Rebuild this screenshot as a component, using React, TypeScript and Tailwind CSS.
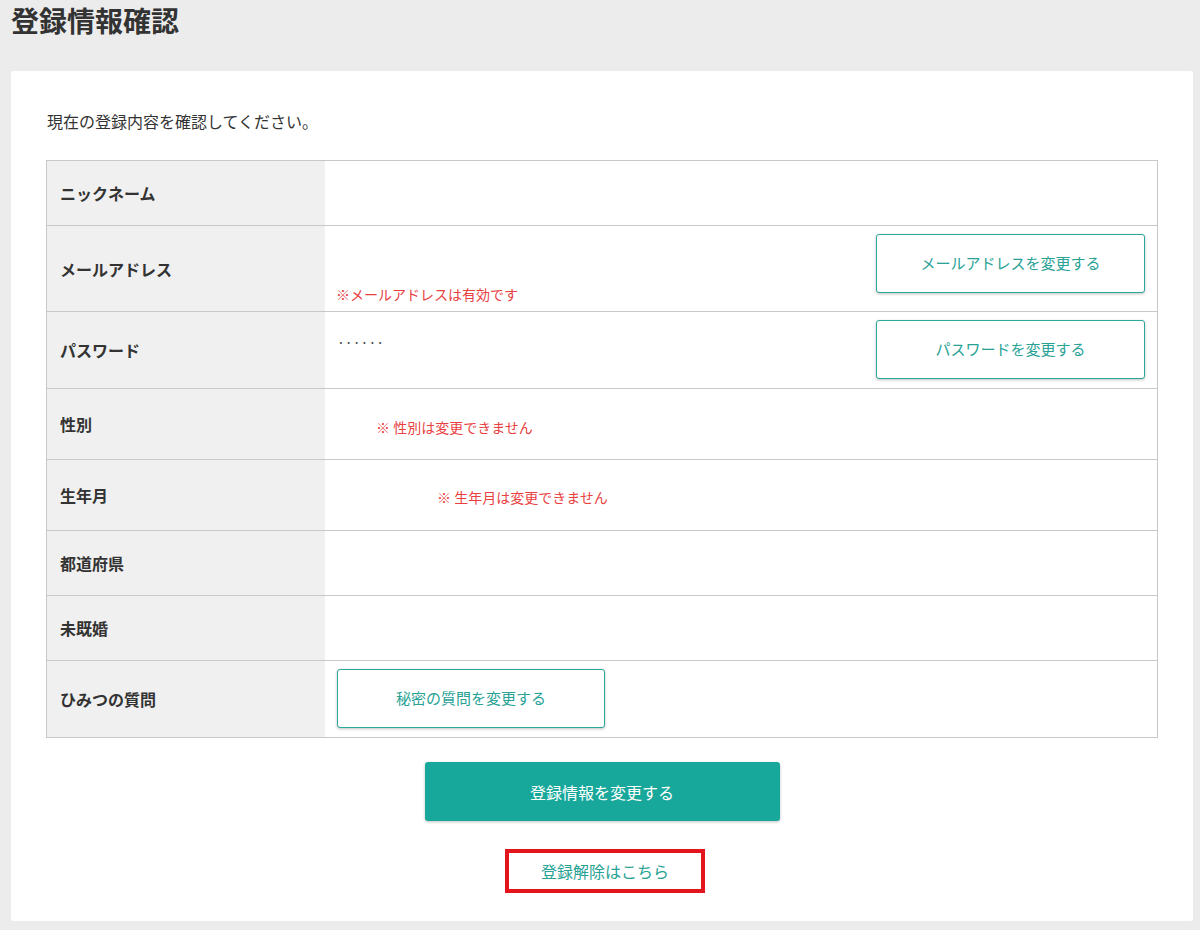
import React from "react";

const font = { fontFamily: '"Noto Sans CJK JP", "Noto Sans", sans-serif' };

function Label({ children }: { children: React.ReactNode }) {
  return (
    <div className="w-[278px] shrink-0 bg-[#f0f0f0] flex items-center pl-[13px] text-[16px] font-bold text-[#333]">
      {children}
    </div>
  );
}

function OutlineButton({ children, w }: { children: React.ReactNode; w: string }) {
  return (
    <button
      className={`${w} h-[59px] rounded-[3px] border border-[#2aa89a] bg-white text-[15px] text-[#27a295] shadow-[0_1px_3px_rgba(0,0,0,0.25)] flex items-center justify-center`}
    >
      {children}
    </button>
  );
}

export default function App() {
  return (
    <div className="min-h-[930px] w-[1200px] bg-[#ececec] pb-[10px]" style={font}>
      <h1 className="pl-[11px] h-[40px] leading-[40px] text-[28px] font-bold text-[#333]">登録情報確認</h1>
      <div className="mt-[31px] ml-[11px] w-[1182px] bg-white rounded-[3px] pt-[38px] pb-[28px] px-[35px]">
        <p className="text-[16px] leading-[24px] text-[#333] pl-[1px]">現在の登録内容を確認してください。</p>
        <div className="mt-[27px] border border-[#c8c8c8] flex flex-col">
          <div className="flex h-[65px] border-b border-[#c8c8c8]">
            <Label>ニックネーム</Label>
            <div className="flex-1" />
          </div>
          <div className="flex h-[86px] border-b border-[#c8c8c8]">
            <Label>メールアドレス</Label>
            <div className="flex-1 flex justify-between pr-[12px] pl-[11px]">
              <div className="self-end pb-[7px] text-[14px] leading-[20px] text-[#e8413f]">※メールアドレスは有効です</div>
              <div className="pt-[8px]">
                <OutlineButton w="w-[269px]">メールアドレスを変更する</OutlineButton>
              </div>
            </div>
          </div>
          <div className="flex h-[77px] border-b border-[#c8c8c8]">
            <Label>パスワード</Label>
            <div className="flex-1 flex justify-between pr-[12px] pl-[12px]">
              <div className="pt-[20px] text-[14px] leading-[20px] text-[#444] tracking-[0px]">······</div>
              <div className="pt-[8px]">
                <OutlineButton w="w-[269px]">パスワードを変更する</OutlineButton>
              </div>
            </div>
          </div>
          <div className="flex h-[71px] border-b border-[#c8c8c8]">
            <Label>性別</Label>
            <div className="flex-1 flex items-center pl-[51px] pt-[6px] text-[14px] text-[#e8413f]">※ 性別は変更できません</div>
          </div>
          <div className="flex h-[71px] border-b border-[#c8c8c8]">
            <Label>生年月</Label>
            <div className="flex-1 flex items-center pl-[112px] pt-[4px] text-[14px] text-[#e8413f]">※ 生年月は変更できません</div>
          </div>
          <div className="flex h-[65px] border-b border-[#c8c8c8]">
            <Label>都道府県</Label>
            <div className="flex-1" />
          </div>
          <div className="flex h-[65px] border-b border-[#c8c8c8]">
            <Label>未既婚</Label>
            <div className="flex-1" />
          </div>
          <div className="flex h-[76px]">
            <Label>ひみつの質問</Label>
            <div className="flex-1 pl-[12px] pt-[8px]">
              <OutlineButton w="w-[268px]">秘密の質問を変更する</OutlineButton>
            </div>
          </div>
        </div>
        <div className="mt-[24px] flex justify-center">
          <button className="w-[355px] h-[59px] rounded-[3px] bg-[#17a89b] text-white text-[16px] shadow-[0_1px_3px_rgba(0,0,0,0.25)]">
            登録情報を変更する
          </button>
        </div>
        <div className="mt-[28px] flex justify-center pl-[6px]">
          <div className="w-[200px] h-[44px] border-[4px] border-[#e3141b] flex items-center justify-center text-[16px] text-[#27a295]">
            登録解除はこちら
          </div>
        </div>
      </div>
    </div>
  );
}
